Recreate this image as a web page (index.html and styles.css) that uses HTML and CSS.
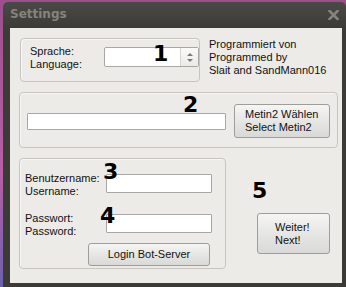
FILE: index.html
```html
<!DOCTYPE html>
<html lang="de">
<head>
    <meta charset="UTF-8">
    <title>Settings</title>
    <link rel="stylesheet" href="styles.css">
</head>
<body>
    <div class="window">
        <div class="title-bar">
            <span class="title">Settings</span>
            <svg class="close" width="11" height="10" viewBox="0 0 11 10">
                <path d="M1.5 1 L9.5 9 M9.5 1 L1.5 9" stroke="#858480" stroke-width="2.6" stroke-linecap="square"/>
            </svg>
        </div>
        <div class="content">
            <div class="row row-top">
                <div class="group group-lang">
                    <div class="labels">Sprache:<br>Language:</div>
                    <div class="spinbox">
                        <div class="spin-field"></div>
                        <div class="spin-arrows">
                            <span class="arrow-up"></span>
                            <span class="arrow-down"></span>
                        </div>
                    </div>
                </div>
                <div class="credits">Programmiert von<br>Programmed by<br>Slait and SandMann016</div>
            </div>

            <div class="row">
                <div class="group group-path">
                    <div class="text-field path-field"></div>
                    <button class="btn btn-select">Metin2 Wählen<br>Select Metin2</button>
                </div>
            </div>

            <div class="row row-bottom">
                <div class="group group-login">
                    <div class="login-row">
                        <div class="labels">Benutzername:<br>Username:</div>
                        <div class="text-field login-field"></div>
                    </div>
                    <div class="login-row row-pass">
                        <div class="labels">Passwort:<br>Password:</div>
                        <div class="text-field login-field"></div>
                    </div>
                    <button class="btn btn-login">Login Bot-Server</button>
                </div>
                <div class="next-col">
                    <button class="btn btn-next">Weiter!<br>Next!</button>
                </div>
            </div>

            <span class="step step-1">1</span>
            <span class="step step-2">2</span>
            <span class="step step-3">3</span>
            <span class="step step-4">4</span>
            <span class="step step-5">5</span>
        </div>
    </div>
</body>
</html>
```

FILE: styles.css
```css
* {
    margin: 0;
    padding: 0;
    box-sizing: border-box;
}

body {
    width: 346px;
    height: 287px;
    overflow: hidden;
    background: linear-gradient(180deg, #9c4f8c 0%, #b85fa6 60%, #6c5fb0 100%);
    font-family: "Liberation Sans", Arial, sans-serif;
    font-size: 11px;
    color: #111;
}

.window {
    margin: 2px 0 0 3px;
    width: 343px;
    height: 285px;
    background: linear-gradient(180deg, #4a4945 0px, #3c3b37 26px, #3b3a36 100%);
    border-radius: 5px 5px 0 0;
    padding: 0 4px 4px 7px;
    display: flex;
    flex-direction: column;
}

.title-bar {
    height: 26px;
    display: flex;
    justify-content: space-between;
    align-items: center;
    padding: 0 3px 2px 0;
}

.title {
    font-family: "DejaVu Sans", sans-serif;
    font-weight: bold;
    font-size: 12px;
    color: #85837e;
}

.close {
    display: block;
    margin-top: 1px;
}

.content {
    position: relative;
    flex: 1;
    background-color: #edebe7;
    display: flex;
    flex-direction: column;
}

.row {
    display: flex;
    margin-top: 10px;
    padding-left: 9px;
}

.row-top {
    padding-left: 10px;
}

.group {
    border: 1px solid #c8c5bf;
    border-radius: 4px;
    box-shadow: inset 1px 1px 0 #f8f7f5;
}

.labels {
    line-height: 13px;
}

.group-lang {
    width: 180px;
    height: 44px;
    display: flex;
    padding: 6px 0 0 9px;
}

.spinbox {
    display: flex;
    margin: 2px 0 0 22px;
    width: 96px;
    height: 20px;
    border: 1px solid #a9a7a3;
    border-radius: 2px;
    background-color: #fff;
}

.spin-field {
    flex: 1;
}

.spin-arrows {
    width: 18px;
    border-left: 1px solid #d6d4d0;
    background: linear-gradient(180deg, #fafaf9, #eceae7);
    display: flex;
    flex-direction: column;
    align-items: center;
    justify-content: center;
    gap: 3px;
}

.arrow-up {
    border-left: 3px solid transparent;
    border-right: 3px solid transparent;
    border-bottom: 3px solid #7a7a78;
}

.arrow-down {
    border-left: 3px solid transparent;
    border-right: 3px solid transparent;
    border-top: 3px solid #7a7a78;
}

.credits {
    margin: 0 0 0 9px;
    line-height: 13px;
}

.group-path {
    width: 319px;
    height: 56px;
    display: flex;
    align-items: flex-start;
    padding: 11px 0 0 7px;
}

.text-field {
    background-color: #fff;
    border: 1px solid #a9a7a3;
    border-radius: 1px;
}

.path-field {
    width: 199px;
    height: 17px;
    margin-top: 9px;
}

.btn {
    font-family: "Liberation Sans", Arial, sans-serif;
    font-size: 11px;
    color: #111;
    text-align: left;
    line-height: 13px;
    background: linear-gradient(180deg, #f5f5f4 0%, #e6e6e4 50%, #d9d9d7 100%);
    border: 1px solid #9e9d9a;
    border-radius: 3px;
}

.btn-select {
    width: 96px;
    height: 34px;
    margin-left: 8px;
    padding-left: 10px;
}

.row-bottom {
    align-items: flex-start;
}

.group-login {
    width: 207px;
    height: 111px;
    padding: 13px 0 0 5px;
    display: flex;
    flex-direction: column;
}

.login-row {
    display: flex;
}

.row-pass {
    margin-top: 14px;
}

.login-field {
    width: 106px;
    height: 19px;
    margin-left: 8px;
    margin-top: 2px;
}

.login-row .labels {
    width: 73px;
}

.btn-login {
    width: 122px;
    height: 23px;
    margin: 5px 0 0 63px;
    text-align: center;
}

.next-col {
    padding: 55px 0 0 31px;
}

.btn-next {
    width: 73px;
    height: 41px;
    padding-left: 17px;
}

.step {
    position: absolute;
    font-family: "DejaVu Sans", sans-serif;
    font-weight: bold;
    font-size: 22px;
    line-height: 22px;
    color: #000;
}

.step-1 {
    left: 143px;
    top: 15px;
}

.step-2 {
    left: 173px;
    top: 66px;
}

.step-3 {
    left: 93px;
    top: 133px;
}

.step-4 {
    left: 90px;
    top: 177px;
}

.step-5 {
    left: 242px;
    top: 152px;
}
```
